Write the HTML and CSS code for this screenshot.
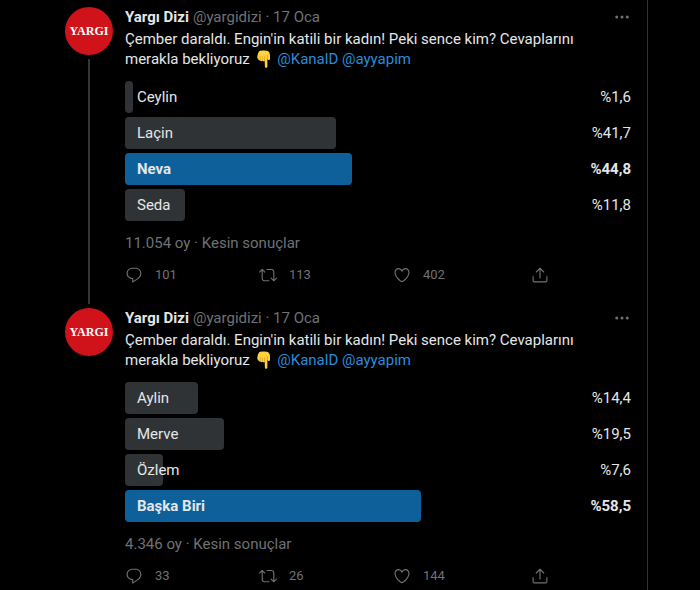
FILE: index.html
```html
<!DOCTYPE html>
<html lang="tr">
<head>
  <meta charset="UTF-8" />
  <meta name="viewport" content="width=device-width, initial-scale=1" />
  <title>Yargı Dizi</title>
  <link rel="stylesheet" href="styles.css">
</head>
<body>
  <!-- Shared icons -->
  <svg class="sprite" aria-hidden="true">
    <symbol id="reply" viewBox="0 0 24 24">
      <path d="M14.046 2.242l-4.148-.01h-.002c-4.374 0-7.8 3.427-7.8 7.802 0 4.098 3.186 7.206 7.465 7.37v3.828c0 .108.044.286.12.403.142.225.384.347.632.347.138 0 .277-.038.402-.118.264-.168 6.473-4.14 8.088-5.506 1.902-1.61 3.04-3.97 3.043-6.312v-.017c-.006-4.367-3.43-7.787-7.8-7.788zm3.787 12.972c-1.134.96-4.862 3.405-6.772 4.643V16.67c0-.414-.335-.75-.75-.75h-.396c-3.66 0-6.318-2.476-6.318-5.886 0-3.534 2.768-6.302 6.3-6.302l4.147.01h.002c3.532 0 6.3 2.766 6.302 6.296-.003 1.91-.942 3.844-2.514 5.176z"/>
    </symbol>
    <symbol id="retweet" viewBox="0 0 24 24">
      <path d="M23.77 15.67c-.292-.293-.767-.293-1.06 0l-2.22 2.22V7.65c0-2.068-1.683-3.75-3.75-3.75h-5.85c-.414 0-.75.336-.75.75s.336.75.75.75h5.85c1.24 0 2.25 1.01 2.25 2.25v10.24l-2.22-2.22c-.293-.293-.768-.293-1.06 0s-.294.768 0 1.06l3.5 3.5c.145.147.337.22.53.22s.383-.072.53-.22l3.5-3.5c.294-.292.294-.767 0-1.06zm-10.66 3.28H7.26c-1.24 0-2.25-1.01-2.25-2.25V6.46l2.22 2.22c.148.147.34.22.532.22s.384-.073.53-.22c.293-.293.293-.768 0-1.06l-3.5-3.5c-.293-.294-.768-.294-1.06 0l-3.5 3.5c-.294.292-.294.767 0 1.06s.767.293 1.06 0l2.22-2.22V16.7c0 2.068 1.683 3.75 3.75 3.75h5.85c.414 0 .75-.336.75-.75s-.337-.75-.75-.75z"/>
    </symbol>
    <symbol id="like" viewBox="0 0 24 24">
      <path d="M12 21.638h-.014C9.403 21.59 1.95 14.856 1.95 8.478c0-3.064 2.525-5.754 5.403-5.754 2.29 0 3.83 1.58 4.646 2.73.814-1.148 2.354-2.73 4.645-2.73 2.88 0 5.404 2.69 5.404 5.755 0 6.376-7.454 13.11-10.037 13.157H12zM7.354 4.225c-2.08 0-3.903 1.988-3.903 4.255 0 5.74 7.034 11.596 8.55 11.658 1.518-.062 8.55-5.917 8.55-11.658 0-2.267-1.823-4.255-3.903-4.255-2.528 0-3.94 2.936-3.952 2.965-.23.562-1.156.562-1.387 0-.014-.03-1.425-2.965-3.954-2.965z"/>
    </symbol>
    <symbol id="share" viewBox="0 0 24 24">
      <path d="M12 16V3M7 8l5-5 5 5M2.8 14v5.6c0 .9.7 1.6 1.6 1.6h15.2c.9 0 1.6-.7 1.6-1.6V14" fill="none" stroke="currentColor" stroke-width="1.5" stroke-linecap="round" stroke-linejoin="round"/>
    </symbol>
    <symbol id="more" viewBox="0 0 24 24">
      <circle cx="5" cy="12" r="2"/>
      <circle cx="12" cy="12" r="2"/>
      <circle cx="19" cy="12" r="2"/>
    </symbol>
    <symbol id="hand" viewBox="0 0 18 18">
      <path d="M4.500 1C6 .2 11 .2 12.800 1c1.400.8 2.200 2.600 2.200 4.500v3.200c0 1.300-1.600 1.600-2.100.7l-.5-1v8c0 1.700-2.400 1.700-2.500 0l-.2-5.700c-.5.800-1.700.8-2.200 0-.6.700-1.800.6-2.200-.3-1 .5-2-.2-2-1.300-.9-.3-1.200-1.200-1-2.200C2.600 4.500 3.200 2 4.500 1z" fill="#fdd23b"/>
      <path d="M9.600 6.800v4M7.400 7v3.500M5.200 6.500v3M12.400 8.400V5.500" fill="none" stroke="#d99a1c" stroke-width=".7" stroke-linecap="round"/>
    </symbol>
  </svg>

  <main class="timeline">
    <article class="tweet">
      <div class="side">
        <a class="avatar" href="#" aria-label="Yargı Dizi">YARGI</a>
        <div class="thread-line"></div>
      </div>
      <div class="content">
        <header class="tweet-header">
          <a class="name" href="#">Yargı Dizi</a>
          <span class="meta">@yargidizi · 17 Oca</span>
          <button class="more-btn" type="button" aria-label="Daha fazla"><svg class="icon"><use href="#more"/></svg></button>
        </header>
        <p class="text">Çember daraldı. Engin'in katili bir kadın! Peki sence kim? Cevaplarını merakla bekliyoruz <svg class="emoji" aria-hidden="true"><use href="#hand"/></svg> <a href="#">@KanalD</a> <a href="#">@ayyapim</a></p>
        <ul class="poll">
          <li class="option"><span class="bar" style="width: 1.6%"></span><span class="label">Ceylin</span><span class="percent">%1,6</span></li>
          <li class="option"><span class="bar" style="width: 41.7%"></span><span class="label">Laçin</span><span class="percent">%41,7</span></li>
          <li class="option winner"><span class="bar" style="width: 44.8%"></span><span class="label">Neva</span><span class="percent">%44,8</span></li>
          <li class="option"><span class="bar" style="width: 11.8%"></span><span class="label">Seda</span><span class="percent">%11,8</span></li>
        </ul>
        <div class="votes">11.054 oy · Kesin sonuçlar</div>
        <div class="actions">
          <button class="action" type="button" aria-label="Yanıtla"><svg class="icon"><use href="#reply"/></svg><span>101</span></button>
          <button class="action" type="button" aria-label="Retweetle"><svg class="icon"><use href="#retweet"/></svg><span>113</span></button>
          <button class="action" type="button" aria-label="Beğen"><svg class="icon"><use href="#like"/></svg><span>402</span></button>
          <button class="action share" type="button" aria-label="Paylaş"><svg class="icon"><use href="#share"/></svg></button>
        </div>
      </div>
    </article>

    <article class="tweet">
      <div class="side">
        <a class="avatar" href="#" aria-label="Yargı Dizi">YARGI</a>
      </div>
      <div class="content">
        <header class="tweet-header">
          <a class="name" href="#">Yargı Dizi</a>
          <span class="meta">@yargidizi · 17 Oca</span>
          <button class="more-btn" type="button" aria-label="Daha fazla"><svg class="icon"><use href="#more"/></svg></button>
        </header>
        <p class="text">Çember daraldı. Engin'in katili bir kadın! Peki sence kim? Cevaplarını merakla bekliyoruz <svg class="emoji" aria-hidden="true"><use href="#hand"/></svg> <a href="#">@KanalD</a> <a href="#">@ayyapim</a></p>
        <ul class="poll">
          <li class="option"><span class="bar" style="width: 14.4%"></span><span class="label">Aylin</span><span class="percent">%14,4</span></li>
          <li class="option"><span class="bar" style="width: 19.5%"></span><span class="label">Merve</span><span class="percent">%19,5</span></li>
          <li class="option"><span class="bar" style="width: 7.6%"></span><span class="label">Özlem</span><span class="percent">%7,6</span></li>
          <li class="option winner"><span class="bar" style="width: 58.5%"></span><span class="label">Başka Biri</span><span class="percent">%58,5</span></li>
        </ul>
        <div class="votes">4.346 oy · Kesin sonuçlar</div>
        <div class="actions">
          <button class="action" type="button" aria-label="Yanıtla"><svg class="icon"><use href="#reply"/></svg><span>33</span></button>
          <button class="action" type="button" aria-label="Retweetle"><svg class="icon"><use href="#retweet"/></svg><span>26</span></button>
          <button class="action" type="button" aria-label="Beğen"><svg class="icon"><use href="#like"/></svg><span>144</span></button>
          <button class="action share" type="button" aria-label="Paylaş"><svg class="icon"><use href="#share"/></svg></button>
        </div>
      </div>
    </article>
  </main>
</body>
</html>
```

FILE: styles.css
```css
* {
  box-sizing: border-box;
}
body {
  margin: 0;
  background: #000;
  color: #e4e6e7;
  font-family: Roboto, "Liberation Sans", sans-serif;
  font-size: 15px;
  line-height: 20px;
}
a {
  color: #2b8bdb;
  text-decoration: none;
}
button {
  padding: 0;
  border: none;
  background: none;
  color: inherit;
  font: inherit;
  cursor: pointer;
}
.sprite {
  display: none;
}
.timeline {
  margin-right: 52px;
  padding: 3px 16px 0 65px;
  border-right: 1px solid #2f3336;
}
.tweet {
  display: flex;
  gap: 12px;
  padding-top: 4px;
}
.side {
  display: flex;
  flex-direction: column;
  align-items: center;
  gap: 4px;
}
.avatar {
  display: flex;
  align-items: center;
  justify-content: center;
  width: 48px;
  height: 48px;
  border-radius: 50%;
  background: #d0131b;
  color: #fff;
  font-family: "Liberation Serif", serif;
  font-size: 12px;
  font-weight: 700;
}
.thread-line {
  flex: 1;
  width: 2px;
  background: #333639;
}
.content {
  flex: 1;
  min-width: 0;
  padding-bottom: 19px;
}
.tweet-header {
  display: flex;
  align-items: center;
  gap: 4px;
}
.name {
  color: #e4e6e7;
  font-weight: 700;
}
.meta,
.votes,
.actions,
.more-btn {
  color: #6e7276;
}
.more-btn {
  display: flex;
  margin-left: auto;
}
.icon {
  width: 18px;
  height: 18px;
  fill: currentColor;
}
.text {
  margin: 2px 0 12px;
  padding-right: 16px;
}
.emoji {
  width: 18px;
  height: 18px;
  margin: 0 1px;
  vertical-align: -4px;
}
.poll {
  display: flex;
  flex-direction: column;
  gap: 4px;
  margin: 0;
  padding: 0;
  list-style: none;
}
.option {
  display: grid;
  grid-template-columns: 1fr auto;
  align-items: center;
  height: 32px;
}
.bar {
  grid-area: 1 / 1 / 2 / 3;
  height: 100%;
  border-radius: 4px;
  background: #303336;
}
.label {
  grid-area: 1 / 1;
  padding-left: 12px;
}
.percent {
  grid-area: 1 / 2;
}
.winner {
  font-weight: 700;
}
.winner .bar {
  background: #0d6099;
}
.votes {
  margin-top: 12px;
}
.actions {
  display: grid;
  grid-template-columns: repeat(3, minmax(0, 134px)) auto;
  margin-top: 12px;
  font-size: 13px;
}
.action {
  display: flex;
  align-items: center;
  gap: 12px;
  height: 20px;
}
.share {
  padding-left: 4px;
}
```
